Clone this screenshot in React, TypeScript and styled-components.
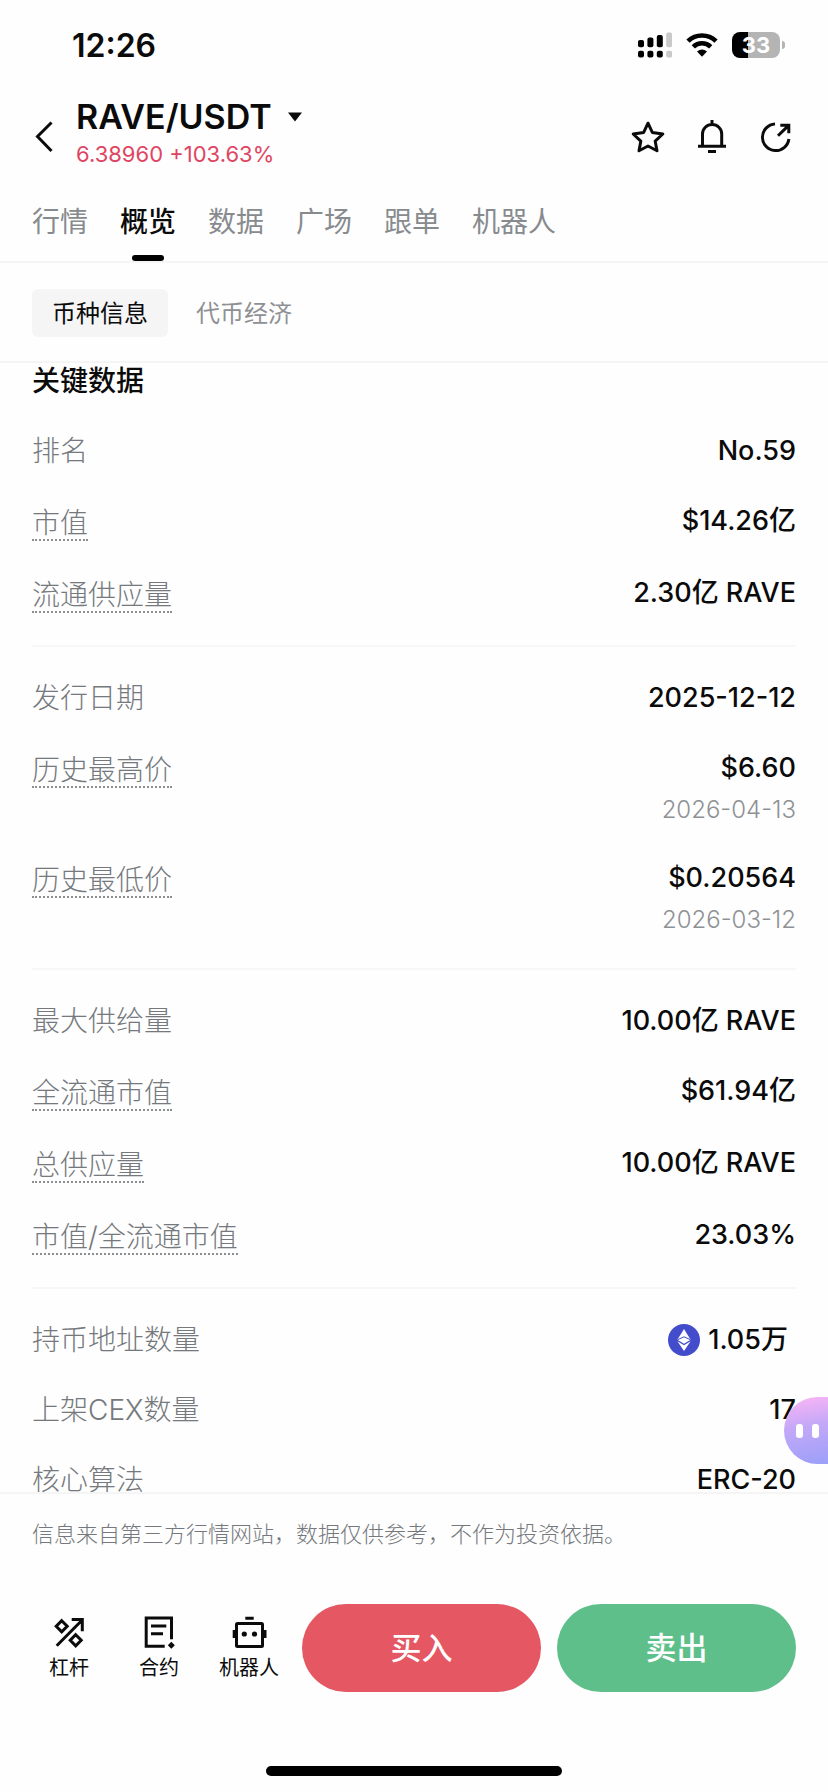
import React from "react";
import styled, { createGlobalStyle } from "styled-components";

const GlobalStyle = createGlobalStyle`
  * { box-sizing: border-box; }
  body {
    margin: 0;
    background: #fefefe;
    color: #0b0b0b;
    font-family: Inter, "Noto Sans CJK SC", sans-serif;
  }
  button {
    margin: 0;
    padding: 0;
    border: 0;
    background: none;
    color: inherit;
    font: inherit;
    cursor: pointer;
  }
  svg { display: block; flex: none; }
`;

const Shell = styled.div`
  position: relative;
  display: flex;
  flex-direction: column;
  min-height: 100vh;
`;

const StatusBar = styled.div`
  display: flex;
  align-items: center;
  justify-content: space-between;
  height: 90px;
  padding: 0 43px 0 72px;
`;

const Clock = styled.time`
  padding-top: 2px;
  font-size: 32px;
  font-weight: 600;
  line-height: 40px;
`;

const StatusIcons = styled.div`
  display: flex;
  align-items: center;
  gap: 14px;
`;

const BatteryWrap = styled.div`
  display: flex;
  align-items: center;
  gap: 2px;
`;

const BatteryBody = styled.div<{ $level: number }>`
  width: 48px;
  height: 26px;
  border-radius: 8px;
  background: linear-gradient(to right, #000 ${(p) => p.$level}%, #b4b4b4 ${(p) => p.$level}%);
  color: #fff;
  font-size: 22px;
  font-weight: 700;
  line-height: 26px;
  text-align: center;
`;

const BatteryNub = styled.div`
  width: 3px;
  height: 8px;
  border-radius: 0 4px 4px 0;
  background: #b4b4b4;
`;

const PairBar = styled.header`
  display: flex;
  align-items: center;
  height: 94px;
  padding: 0 32px;
`;

const PairInfo = styled.div`
  flex: 1;
  margin-left: 20px;
  padding-bottom: 8px;
`;

const PairButton = styled.button`
  display: flex;
  align-items: center;
  gap: 16px;
`;

const PairName = styled.h1`
  margin: 0;
  font-size: 34px;
  font-weight: 600;
  line-height: 42px;
`;

const PairPrice = styled.div`
  color: #df4563;
  font-size: 22px;
  line-height: 32px;
`;

const PairActions = styled.div`
  display: flex;
  gap: 24px;
`;

const TabBar = styled.nav`
  display: flex;
  gap: 32px;
  padding: 0 32px;
  border-bottom: 2px solid #f5f5f5;
`;

const Tab = styled.button<{ $active: boolean }>`
  display: flex;
  flex-direction: column;
  align-items: center;
  gap: 13px;
  padding-top: 18px;
  color: ${(p) => (p.$active ? "#0b0b0b" : "#888b8e")};
  font-size: 28px;
  font-weight: ${(p) => (p.$active ? 500 : 400)};
  line-height: 40px;

  &::after {
    content: "";
    width: 32px;
    height: 6px;
    border-radius: 3px;
    background: ${(p) => (p.$active ? "#000" : "transparent")};
  }
`;

const SegmentBar = styled.div`
  display: flex;
  gap: 8px;
  padding: 26px 32px 24px;
  border-bottom: 2px solid #f5f5f5;
`;

const Segment = styled.button<{ $active: boolean }>`
  padding: 2px 20px 0;
  border-radius: 6px;
  background: ${(p) => (p.$active ? "#f5f5f5" : "transparent")};
  color: ${(p) => (p.$active ? "#0b0b0b" : "#8e9194")};
  font-size: 24px;
  line-height: 46px;
`;

/* The last row runs down onto the rule above the disclaimer. */
const Content = styled.main`
  flex: 1;
  margin-bottom: -8px;
  padding: 0 32px;
`;

const Heading = styled.h2`
  margin: 0 0 32px;
  font-size: 28px;
  font-weight: 500;
  line-height: 36px;
`;

const Group = styled.dl`
  display: flex;
  flex-direction: column;
  gap: 32px;
  margin: 0;
  padding-bottom: 32px;

  & + & {
    padding-top: 31px;
    border-top: 2px solid #f7f7f7;
  }

  &:last-child {
    padding-bottom: 0;
  }
`;

const Row = styled.div`
  display: flex;
  justify-content: space-between;
`;

const Label = styled.dt<{ $hint?: boolean }>`
  align-self: flex-start;
  padding-top: ${(p) => (p.$hint ? 6 : 2)}px;
  border-bottom: ${(p) => (p.$hint ? "2px dotted #8c8f92" : "0")};
  color: #75797d;
  font-size: 28px;
  font-weight: 300;
  line-height: ${(p) => (p.$hint ? 32 : 36)}px;
`;

const Value = styled.dd`
  display: flex;
  flex-direction: column;
  align-items: flex-end;
  gap: 8px;
  margin: 0;
  padding-top: 2px;
  font-size: 27px;
  font-weight: 500;
  line-height: 36px;
`;

const ChainValue = styled.span`
  display: flex;
  align-items: center;
  gap: 8px;
  padding-right: 8px;
`;

const ValueNote = styled.span`
  color: #8e9194;
  font-size: 24px;
  font-weight: 300;
  line-height: 32px;
`;

const Assistant = styled.button`
  position: absolute;
  right: 0;
  bottom: 328px;
  display: flex;
  align-items: center;
  gap: 9px;
  width: 44px;
  height: 67px;
  padding-left: 12px;
  border-radius: 34px 0 0 34px;
  background: linear-gradient(170deg, #f7b4f5 5%, #c3a8f8 45%, #9fa0f8 95%);
`;

const AssistantEye = styled.span`
  width: 7px;
  height: 14px;
  border-radius: 3px;
  background: #fff;
`;

const Disclaimer = styled.p`
  margin: 0;
  padding: 0 32px;
  border-top: 2px solid #f5f5f5;
  color: #75797d;
  font-size: 22px;
  font-weight: 300;
  line-height: 80px;
`;

const ActionBar = styled.footer`
  display: flex;
  align-items: center;
  gap: 8px;
  padding: 30px 32px 74px 24px;
`;

const ShortcutList = styled.nav`
  display: flex;
`;

const Shortcut = styled.button`
  display: flex;
  flex-direction: column;
  align-items: center;
  gap: 4px;
  width: 90px;
  font-size: 20px;
  line-height: 28px;
`;

const TradeButtons = styled.div`
  display: flex;
  flex: 1;
  gap: 16px;
`;

const TradeButton = styled.button<{ $side: "buy" | "sell" }>`
  flex: 1;
  border-radius: 44px;
  background: ${(p) => (p.$side === "buy" ? "#e45763" : "#5fbf8b")};
  color: #fff;
  font-size: 31px;
  font-weight: 500;
  line-height: 88px;
`;

const HomeIndicator = styled.div`
  align-self: center;
  width: 296px;
  height: 10px;
  margin-bottom: 16px;
  border-radius: 5px;
  background: #000;
`;

const stroke = { fill: "none", stroke: "#0b0b0b", strokeWidth: 3 };

const SignalIcon = () => (
  <svg width="34" height="26" viewBox="0 0 34 26">
    {[8, 5.5, 3, 0.5].map((top, i) => (
      <g key={top} fill={i === 3 ? "#c9c9c9" : "#000"}>
        <rect x={i * 9.4} y={top} width="6" height={15.3 - top} rx="2" />
        <rect x={i * 9.4} y="18.7" width="6" height="6.8" rx="2" />
      </g>
    ))}
  </svg>
);

const WifiIcon = () => (
  <svg width="32" height="24" viewBox="0 0 32 24">
    <g fill="none" stroke="#000" strokeWidth="4.6">
      <path d="M2 8.2A20 20 0 0 1 30 8.2" />
      <path d="M7.3 13.8A12.5 12.5 0 0 1 24.7 13.8" />
    </g>
    <path d="M11 18.4Q16 14.4 21 18.4L16 23.7Z" />
  </svg>
);

const BackIcon = () => (
  <svg width="24" height="40" viewBox="0 0 24 40">
    <path d="M19.5 5.5L5.5 19.5L19.5 34" {...stroke} />
  </svg>
);

const CaretIcon = () => (
  <svg width="14" height="10" viewBox="0 0 14 10">
    <path d="M0 0.5H14L7 9.5Z" fill="#0b0b0b" />
  </svg>
);

const StarIcon = () => (
  <svg width="40" height="40" viewBox="0 0 40 40">
    <path
      d="M20 6.2L24.3 15.4L34.8 17L27.2 24.2L29 33.8L20 29L11 33.8L12.8 24.2L5.2 17L15.7 15.4Z"
      strokeLinejoin="round"
      {...stroke}
    />
  </svg>
);

const BellIcon = () => (
  <svg width="40" height="40" viewBox="0 0 40 40">
    <path d="M20 3V7M10.5 29.3V17A9.5 9.5 0 0 1 29.7 17V29.3M6 29.3H34M16 34.4H24" {...stroke} />
  </svg>
);

const ShareIcon = () => (
  <svg width="40" height="40" viewBox="0 0 40 40">
    <path d="M19 7A13.3 13.3 0 1 0 32.9 22M24.3 8.2H32.8V16.2M22 18.8L32.4 8.6" {...stroke} />
  </svg>
);

const EthIcon = () => (
  <svg width="32" height="32" viewBox="0 0 32 32">
    <circle cx="16" cy="16" r="16" fill="#434dcb" />
    <path d="M16 5L22.6 15.7L16 19.8L9.4 15.7Z" fill="#fff" />
    <path d="M9.4 17.2L16 21.2L22.6 17.2L16 27Z" fill="#fff" />
    <path d="M9.8 15.6L16 12.8L22.2 15.6" fill="none" stroke="#434dcb" strokeWidth="1" />
  </svg>
);

const LeverageIcon = () => (
  <svg width="36" height="36" viewBox="0 0 36 36">
    <path
      d="M10.7 6.7L16.2 12.3L10.7 17.9L5.2 12.3ZM24.7 20.7L30.2 26.3L24.7 31.9L19.2 26.3ZM5.7 31.7L31 6.3M20.7 5.5H31.3V17.2"
      {...stroke}
    />
  </svg>
);

const ContractIcon = () => (
  <svg width="36" height="36" viewBox="0 0 36 36">
    <path d="M30.5 25.3V4H5.2V32.2H23.7M10 12H25.3M10 19.7H22" {...stroke} />
    <path d="M30.3 27.8L33.8 31.3L30.3 34.8L26.8 31.3Z" fill="#0b0b0b" />
  </svg>
);

const RobotIcon = () => (
  <svg width="36" height="36" viewBox="0 0 36 36">
    <rect x="5.5" y="9.5" width="26" height="23" rx="1" {...stroke} />
    <path d="M14.3 4.2H22.7M3.2 16V24M34 16V24" {...stroke} />
    <circle cx="13.3" cy="20" r="2.6" fill="#0b0b0b" />
    <circle cx="23.5" cy="20" r="2.6" fill="#0b0b0b" />
  </svg>
);

type Item = { label: string; value: React.ReactNode; hint?: boolean; note?: string };

const groups: Item[][] = [
  [
    { label: "排名", value: "No.59" },
    { label: "市值", value: "$14.26亿", hint: true },
    { label: "流通供应量", value: "2.30亿 RAVE", hint: true },
  ],
  [
    { label: "发行日期", value: "2025-12-12" },
    { label: "历史最高价", value: "$6.60", hint: true, note: "2026-04-13" },
    { label: "历史最低价", value: "$0.20564", hint: true, note: "2026-03-12" },
  ],
  [
    { label: "最大供给量", value: "10.00亿 RAVE" },
    { label: "全流通市值", value: "$61.94亿", hint: true },
    { label: "总供应量", value: "10.00亿 RAVE", hint: true },
    { label: "市值/全流通市值", value: "23.03%", hint: true },
  ],
  [
    {
      label: "持币地址数量",
      value: (
        <ChainValue>
          <EthIcon />
          1.05万
        </ChainValue>
      ),
    },
    { label: "上架CEX数量", value: "17" },
    { label: "核心算法", value: "ERC-20" },
  ],
];

const tabs = ["行情", "概览", "数据", "广场", "跟单", "机器人"];
const segments = ["币种信息", "代币经济"];
const shortcuts = [
  { label: "杠杆", Icon: LeverageIcon },
  { label: "合约", Icon: ContractIcon },
  { label: "机器人", Icon: RobotIcon },
];

export default function App() {
  const [tab, setTab] = React.useState("概览");
  const [segment, setSegment] = React.useState("币种信息");

  return (
    <Shell>
      <GlobalStyle />
      <StatusBar>
        <Clock>12:26</Clock>
        <StatusIcons>
          <SignalIcon />
          <WifiIcon />
          <BatteryWrap>
            <BatteryBody $level={34}>33</BatteryBody>
            <BatteryNub />
          </BatteryWrap>
        </StatusIcons>
      </StatusBar>

      <PairBar>
        <button aria-label="返回">
          <BackIcon />
        </button>
        <PairInfo>
          <PairButton>
            <PairName>RAVE/USDT</PairName>
            <CaretIcon />
          </PairButton>
          <PairPrice>6.38960 +103.63%</PairPrice>
        </PairInfo>
        <PairActions>
          <button aria-label="收藏">
            <StarIcon />
          </button>
          <button aria-label="提醒">
            <BellIcon />
          </button>
          <button aria-label="分享">
            <ShareIcon />
          </button>
        </PairActions>
      </PairBar>

      <TabBar>
        {tabs.map((name) => (
          <Tab key={name} $active={name === tab} onClick={() => setTab(name)}>
            {name}
          </Tab>
        ))}
      </TabBar>

      <SegmentBar>
        {segments.map((name) => (
          <Segment key={name} $active={name === segment} onClick={() => setSegment(name)}>
            {name}
          </Segment>
        ))}
      </SegmentBar>

      <Content>
        <Heading>关键数据</Heading>
        {groups.map((items) => (
          <Group key={items[0].label}>
            {items.map(({ label, value, hint, note }) => (
              <Row key={label}>
                <Label $hint={hint}>{label}</Label>
                <Value>
                  {value}
                  {note && <ValueNote>{note}</ValueNote>}
                </Value>
              </Row>
            ))}
          </Group>
        ))}
      </Content>

      <Disclaimer>信息来自第三方行情网站，数据仅供参考，不作为投资依据。</Disclaimer>

      <ActionBar>
        <ShortcutList>
          {shortcuts.map(({ label, Icon }) => (
            <Shortcut key={label}>
              <Icon />
              {label}
            </Shortcut>
          ))}
        </ShortcutList>
        <TradeButtons>
          <TradeButton $side="buy">买入</TradeButton>
          <TradeButton $side="sell">卖出</TradeButton>
        </TradeButtons>
      </ActionBar>

      <HomeIndicator />

      <Assistant aria-label="智能助手">
        <AssistantEye />
        <AssistantEye />
      </Assistant>
    </Shell>
  );
}
